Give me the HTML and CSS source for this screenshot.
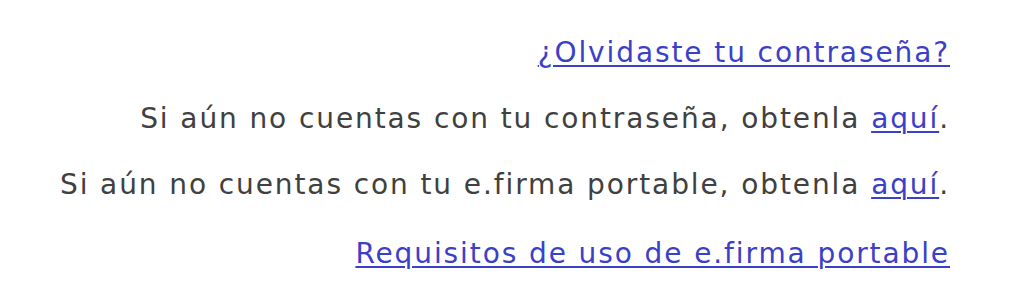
FILE: index.html
```html
<!DOCTYPE html>
<html lang="es">
<head>
<meta charset="utf-8">
<link rel="stylesheet" href="styles.css">
</head>
<body>
<div class="links">
  <p class="row"><a class="lnk" href="#">¿Olvidaste tu contraseña?</a></p>
  <p class="row">Si aún no cuentas con tu contraseña, obtenla <a class="lnk" href="#">aquí</a>.</p>
  <p class="row">Si aún no cuentas con tu e.firma portable, obtenla <a class="lnk" href="#">aquí</a>.</p>
  <p class="row row-last"><a class="lnk" href="#">Requisitos de uso de e.firma portable</a></p>
</div>
</body>
</html>
```
FILE: styles.css
```css
html, body {
  margin: 0;
  padding: 0;
  background: #ffffff;
}
.links {
  display: flex;
  flex-direction: column;
  align-items: flex-end;
  padding: 20px 74px 0 0;
}
.row {
  margin: 0;
  height: 66px;
  line-height: 66px;
  font-family: "DejaVu Sans", sans-serif;
  font-size: 28px;
  letter-spacing: 1.9px;
  color: #404040;
  white-space: nowrap;
}
.row-last {
  margin-top: 3px;
}
.lnk {
  color: #3b40c8;
  text-decoration: underline;
  text-decoration-thickness: 2px;
  text-underline-offset: 3px;
}
```
